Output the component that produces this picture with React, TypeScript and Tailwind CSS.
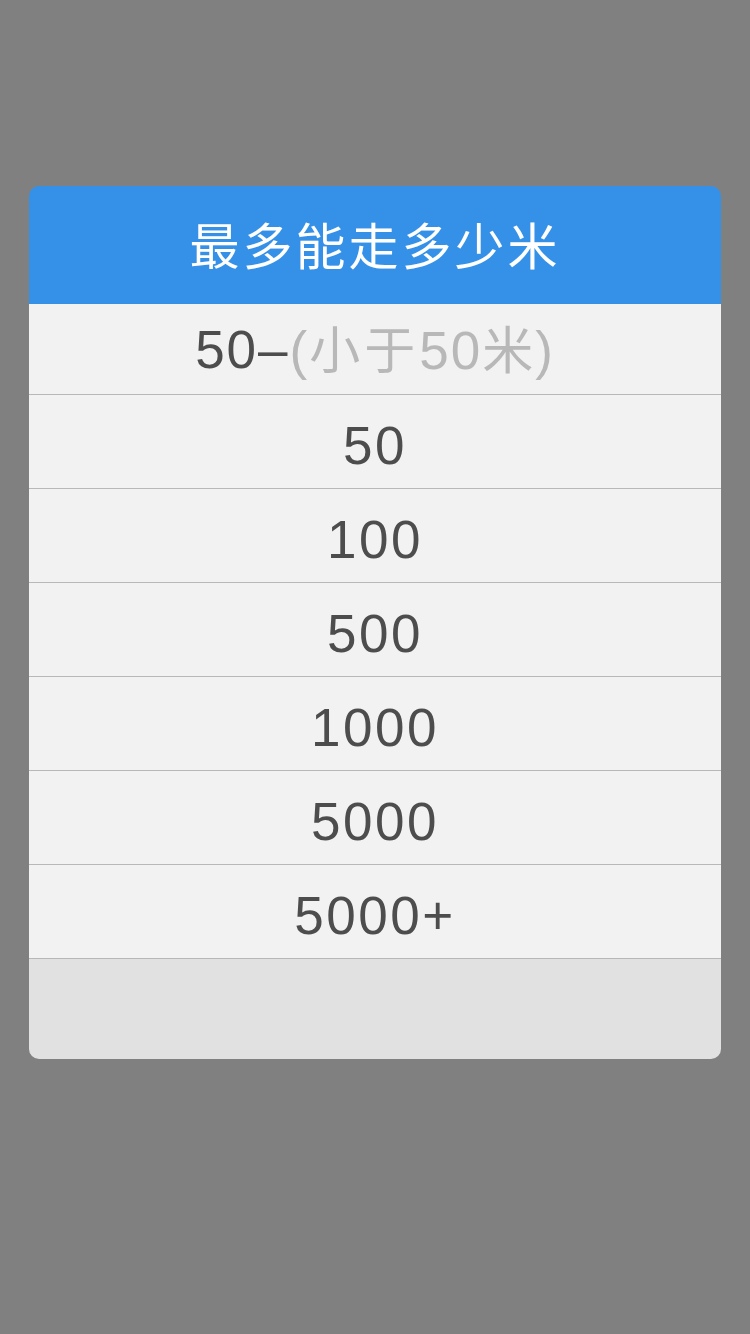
import React from "react";

const rows = ["50", "100", "500", "1000", "5000", "5000+"];

export default function App() {
  return (
    <div
      className="w-[750px] h-[1334px] bg-[#808080] flex flex-col items-center pt-[186px]"
      style={{ fontFamily: '"Liberation Sans", "Noto Sans CJK SC", sans-serif' }}
    >
      <div className="w-[692px] rounded-[10px] overflow-hidden flex flex-col">
        <div
          className="h-[118px] bg-[#3591e8] flex items-center justify-center pb-[4px] text-white text-[50px] tracking-[3px]"
          style={{ fontFamily: '"Noto Sans CJK SC", sans-serif' }}
        >
          最多能走多少米
        </div>
        <div className="h-[91px] bg-[#f2f2f2] border-b border-[#b8b8b8] flex items-center justify-center pt-[2px] text-[53px] tracking-[2px] text-[#4d4d4d]">
          <span>50–</span>
          <span className="text-[#b8b8b8]">
            (<span style={{ fontFamily: '"Noto Sans CJK SC", sans-serif' }} className="text-[51px] tracking-[4px]">小于</span>50<span style={{ fontFamily: '"Noto Sans CJK SC", sans-serif' }} className="text-[51px]">米</span>)
          </span>
        </div>
        {rows.map((r) => (
          <div
            key={r}
            className="h-[94px] bg-[#f2f2f2] border-b border-[#b8b8b8] flex items-center justify-center pt-[8px] text-[53px] tracking-[2.5px] text-[#4d4d4d]"
          >
            {r}
          </div>
        ))}
        <div className="h-[100px] bg-[#e1e1e1]" />
      </div>
    </div>
  );
}
